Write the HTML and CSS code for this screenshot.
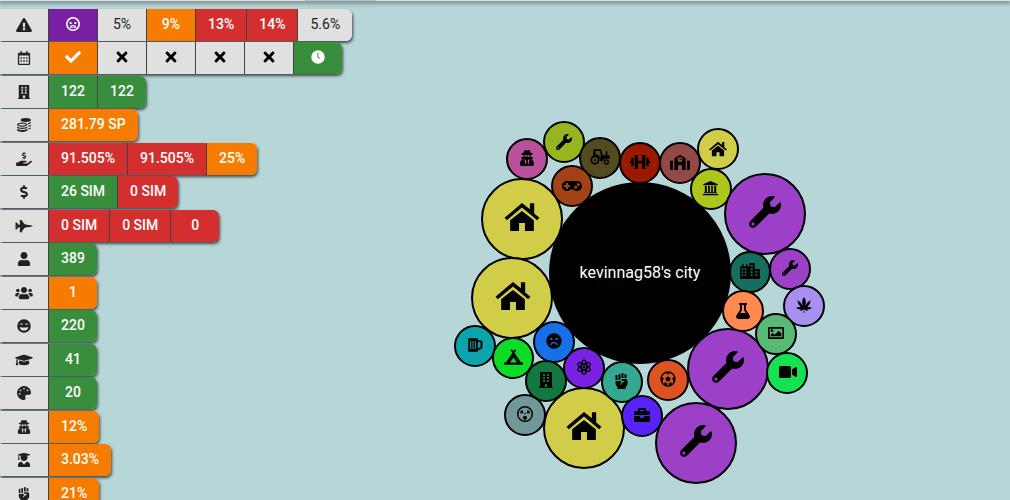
FILE: index.html
```
<!DOCTYPE html>
<html lang="en">
<head>
<meta charset="utf-8">
<meta name="viewport" content="width=device-width, initial-scale=1">
<title>kevinnag58's city</title>
<link rel="stylesheet" href="styles.css">
</head>
<body>
<svg class="symbols" aria-hidden="true">
  <symbol id="warning" viewBox="0 0 576 512"><path d="M569.517 440.013C587.975 472.007 564.806 512 527.94 512H48.054c-36.937 0-59.999-40.055-41.577-71.987L246.423 23.985c18.467-32.009 64.72-31.951 83.154 0l239.94 416.028zM288 354c-25.405 0-46 20.595-46 46s20.595 46 46 46 46-20.595 46-46-20.595-46-46-46zm-43.673-165.346l7.418 136c.347 6.364 5.609 11.346 11.982 11.346h48.546c6.373 0 11.635-4.982 11.982-11.346l7.418-136c.375-6.874-5.098-12.654-11.982-12.654h-63.383c-6.884 0-12.356 5.78-11.981 12.654z"/></symbol>
  <symbol id="check" viewBox="0 0 512 512"><path d="M173.898 439.404l-166.4-166.4c-9.997-9.997-9.997-26.206 0-36.204l36.203-36.204c9.997-9.998 26.207-9.998 36.204 0L192 312.69 432.095 72.596c9.997-9.997 26.207-9.997 36.204 0l36.203 36.204c9.997 9.997 9.997 26.206 0 36.204l-294.4 294.401c-9.998 9.997-26.207 9.997-36.204-.001z"/></symbol>
  <symbol id="times" viewBox="0 0 352 512"><path d="M242.72 256l100.07-100.07c12.28-12.28 12.28-32.19 0-44.48l-22.24-22.24c-12.28-12.28-32.19-12.28-44.48 0L176 189.28 75.93 89.21c-12.28-12.28-32.19-12.28-44.48 0L9.21 111.45c-12.28 12.28-12.28 32.19 0 44.48L109.28 256 9.21 356.07c-12.28 12.28-12.28 32.19 0 44.48l22.24 22.24c12.28 12.28 32.2 12.28 44.48 0L176 322.72l100.07 100.07c12.28 12.28 32.2 12.28 44.48 0l22.24-22.24c12.28-12.28 12.28-32.19 0-44.48L242.72 256z"/></symbol>
  <symbol id="clock" viewBox="0 0 512 512"><path fill-rule="evenodd" d="M256 8a248 248 0 1 0 0 496a248 248 0 1 0 0-496zM236 100h36v150l58 42-22 30-72-54z"/></symbol>
  <symbol id="calendar" viewBox="0 0 448 512"><path fill-rule="evenodd" d="M96 0h48v64h160V0h48v64h48q48 0 48 48v352q0 48-48 48H48q-48 0-48-48V112q0-48 48-48h48zM48 160v304h352V160z"/><path d="M96 224h56v56H96zm100 0h56v56h-56zm100 0h56v56h-56zM96 336h56v56H96zm100 0h56v56h-56zm100 0h56v56h-56z"/></symbol>
  <symbol id="building" viewBox="0 0 448 512"><path fill-rule="evenodd" d="M32 0h384v480h32v32H0v-32h32zM128 64v64h64V64zm128 0v64h64V64zM128 160v64h64v-64zm128 0v64h64v-64zM128 256v64h64v-64zm128 0v64h64v-64zM184 384v96h80v-96z"/></symbol>
  <symbol id="coins" viewBox="0 0 512 512"><g stroke="none"><path d="M128 72C128 32 214 0 320 0s192 32 192 72-86 72-192 72-192-32-192-72z"/><path d="M406 182q70-14 106-44v24c0 30-46 54-106 64zm14 96q60-14 92-40v24c0 28-40 50-92 60zm0 96q60-14 92-40v24c0 28-40 50-92 60z"/><path fill-rule="evenodd" d="M0 240c0-44 86-80 192-80s192 36 192 80-86 80-192 80S0 284 0 240zm50 0c20 24 80 34 142 34s122-10 142-34c-20-24-80-34-142-34s-122 10-142 34z"/><path d="M0 308q64 48 192 48t192-48v26c0 36-86 64-192 64S0 370 0 334zm0 84q64 48 192 48t192-48v50c0 40-86 70-192 70S0 482 0 442z"/></g></symbol>
  <symbol id="dollar" viewBox="0 0 288 512"><path d="M209.2 233.4l-108-31.6C88.7 198.2 80 186.5 80 173.5c0-16.3 13.2-29.5 29.5-29.5h66.3c12.2 0 24.2 3.7 34.2 10.5 6.1 4.1 14.3 3.1 19.5-2l34.8-34c7.1-6.9 6.1-18.4-1.8-24.5C238 74.8 207.4 64.1 176 64V16c0-8.8-7.2-16-16-16h-32c-8.8 0-16 7.2-16 16v48h-2.5C45.8 64-5.4 118.7.5 183.6c4.2 46.1 39.4 83.6 83.8 96.6l102.5 30c12.5 3.7 21.2 15.3 21.2 28.3 0 16.3-13.2 29.5-29.5 29.5h-66.3C100 368 88 364.3 78 357.5c-6.1-4.1-14.3-3.1-19.5 2l-34.8 34c-7.1 6.9-6.1 18.4 1.8 24.5 24.5 19.2 55.1 29.9 86.5 30v48c0 8.8 7.2 16 16 16h32c8.8 0 16-7.2 16-16v-48.2c46.6-.9 90.3-28.6 105.7-72.7 21.5-61.6-14.6-124.8-72.5-141.7z"/></symbol>
  <symbol id="hand" viewBox="0 0 576 512"><path d="M565.3 328.1c-11.8-10.7-30.2-10-42.6 0L430.3 402c-11.3 9.1-25.4 14-40 14H272c-8.8 0-16-7.2-16-16s7.2-16 16-16h78.3c15.9 0 30.7-10.9 33.3-26.6 3.3-20-12.1-37.4-31.6-37.4H192c-27 0-53.1 9.3-74.1 26.3L71.4 384H16c-8.8 0-16 7.2-16 16v96c0 8.8 7.2 16 16 16h356.8c14.5 0 28.6-4.9 40-14L564 377c15.2-12.1 16.4-35.3 1.3-48.9z"/><use href="#dollar" x="212" y="0" width="152" height="270"/></symbol>
  <symbol id="jet" viewBox="0 0 640 512"><path d="M544 224l-128-16-48-16h-24L227.158 44h39.509C278.333 44 288 41.375 288 38s-9.667-6-21.333-6H152v12h16v164h-48l-66.667-80H18.667L8 138.667V208h8v16h48v2.666l-64 8v42.667l64 8V288H16v16H8v69.333L18.667 384h34.667L120 304h48v164h-16v12h114.667c11.667 0 21.333-2.625 21.333-6s-9.667-6-21.333-6h-39.509L344 320h24l48-16 128-16c96-21.333 96-26.583 96-32 0-5.417 0-10.667-96-32z"/></symbol>
  <symbol id="user" viewBox="0 0 448 512"><path d="M224 256c70.7 0 128-57.3 128-128S294.7 0 224 0 96 57.3 96 128s57.3 128 128 128zm89.6 32h-16.7c-22.2 10.2-46.9 16-72.9 16s-50.6-5.8-72.9-16h-16.7C60.2 288 0 348.2 0 422.4V464c0 26.5 21.5 48 48 48h352c26.5 0 48-21.5 48-48v-41.6c0-74.2-60.2-134.4-134.4-134.4z"/></symbol>
  <symbol id="users" viewBox="0 0 640 512"><path d="M96 224c35.3 0 64-28.7 64-64s-28.7-64-64-64-64 28.7-64 64 28.7 64 64 64zm448 0c35.3 0 64-28.7 64-64s-28.7-64-64-64-64 28.7-64 64 28.7 64 64 64zm32 32h-64c-17.6 0-33.5 7.1-45.1 18.6 40.3 22.1 68.9 62 75.1 109.4h66c17.7 0 32-14.3 32-32v-32c0-35.3-28.7-64-64-64zm-256 0c61.9 0 112-50.1 112-112S381.9 32 320 32 208 82.1 208 144s50.1 112 112 112zm76.8 32h-8.3c-20.8 10-43.9 16-68.5 16s-47.6-6-68.5-16h-8.3C179.6 288 128 339.6 128 403.2V432c0 26.5 21.5 48 48 48h288c26.5 0 48-21.5 48-48v-28.8c0-63.6-51.6-115.2-115.2-115.2zm-223.7-13.4C161.5 263.1 145.6 256 128 256H64c-35.3 0-64 28.7-64 64v32c0 17.7 14.3 32 32 32h65.9c6.3-47.4 34.9-87.3 75.2-109.4z"/></symbol>
  <symbol id="smile" viewBox="0 0 512 512"><path fill-rule="evenodd" d="M256 8a248 248 0 1 0 0 496a248 248 0 1 0 0-496zM96 216q10-64 64-64t64 64q-64-48-128 0zm192 0q10-64 64-64t64 64q-64-48-128 0zM100 288q156 50 312 0q-16 136-156 136T100 288z"/></symbol>
  <symbol id="gradcap" viewBox="0 0 640 512"><path d="M622.34 153.2L343.4 67.5c-15.2-4.67-31.6-4.67-46.79 0L17.66 153.2c-23.54 7.23-23.54 38.36 0 45.59l48.63 14.94c-10.67 13.19-17.23 29.28-17.88 46.9C38.78 266.15 32 276.11 32 288c0 10.78 5.68 19.85 13.86 25.65L20.33 428.53C18.11 438.52 25.71 448 35.94 448h56.11c10.24 0 17.84-9.48 15.62-19.47L82.14 313.65C90.32 307.85 96 298.78 96 288c0-11.57-6.47-21.25-15.66-26.87.76-15.02 8.44-28.3 20.69-36.72L296.6 284.5c9.06 2.78 26.44 6.25 46.79 0l278.95-85.7c23.55-7.24 23.55-38.36 0-45.6zM352.79 315.09c-28.53 8.76-52.84 3.92-65.59 0l-145.02-44.55L128 384c0 35.35 85.96 64 192 64s192-28.65 192-64l-14.18-113.47-145.03 44.56z"/></symbol>
  <symbol id="palette" viewBox="0 0 512 512"><path d="M204.3 5C104.9 24.4 24.8 104.3 5.2 203.4c-37 187 131.7 326.4 258.8 306.7 41.2-6.4 61.4-54.6 42.5-91.7-23.1-45.4 9.9-98.4 60.9-98.4h79.7c35.8 0 64.8-29.6 64.9-65.3C511.5 97.1 368.1-26.9 204.3 5zM96 320c-17.7 0-32-14.3-32-32s14.3-32 32-32 32 14.3 32 32-14.3 32-32 32zm32-128c-17.7 0-32-14.3-32-32s14.3-32 32-32 32 14.3 32 32-14.3 32-32 32zm128-64c-17.7 0-32-14.3-32-32s14.3-32 32-32 32 14.3 32 32-14.3 32-32 32zm128 64c-17.7 0-32-14.3-32-32s14.3-32 32-32 32 14.3 32 32-14.3 32-32 32z"/></symbol>
  <symbol id="spy" viewBox="0 0 448 512"><path d="M383.9 308.3l23.9-62.6c4-10.5-3.7-21.7-15-21.7h-58.5c11-18.9 17.8-40.6 17.8-64v-.3c39.2-7.8 64-19.1 64-31.7 0-13.3-27.3-25.1-70.1-33-9.2-32.8-27-65.8-40.6-82.8-9.5-11.9-25.9-15.6-39.5-8.8l-27.6 13.8c-9 4.5-19.6 4.5-28.6 0L182.1 3.4c-13.6-6.8-30-3.1-39.5 8.8-13.5 17-31.4 50-40.6 82.8-42.7 7.9-70 19.7-70 33 0 12.6 24.8 23.9 64 31.7v.3c0 23.4 6.8 45.1 17.8 64H56.3c-11.5 0-19.2 11.7-14.7 22.3l25.8 60.2C27.3 329.8 0 372.7 0 422.4v44.8C0 491.9 20.1 512 44.8 512h358.4c24.7 0 44.8-20.1 44.8-44.8v-44.8c0-48.4-25.8-90.4-64.1-114.1zM176 480l-41.6-192 49.6 32 24 40-32 120zm96 0l-32-120 24-40 49.6-32L272 480zm41.7-298.5c-3.9 11.9-7 24.6-16.5 33.4-10.1 9.3-48 22.4-64-25-2.8-8.4-15.4-8.4-18.3 0-17 50.2-56 32.4-64 25-9.5-8.8-12.7-21.5-16.5-33.4-.8-2.5-6.3-5.7-6.3-5.8v-10.8c28.3 3.6 61 5.8 96 5.8s67.7-2.1 96-5.8v10.8c-.1.1-5.6 3.2-6.4 5.8z"/></symbol>
  <symbol id="graduate" viewBox="0 0 448 512"><path d="M319.4 320.6L224 416l-95.4-95.4C57.1 323.7 0 382.2 0 454.4v9.6c0 26.5 21.5 48 48 48h352c26.5 0 48-21.5 48-48v-9.6c0-72.2-57.1-130.7-128.6-133.8zM13.6 79.8l6.4 1.5v58.4c-7 4.2-12 11.5-12 20.3 0 8.4 4.6 15.4 11.1 19.7L3.5 242c-1.7 6.9 2.1 14 7.6 14h41.8c5.5 0 9.3-7.1 7.6-14l-15.6-62.3C51.4 175.4 56 168.4 56 160c0-8.8-5-16.1-12-20.3V87.1l66 15.9c-8.6 17.2-14 36.4-14 57 0 70.7 57.3 128 128 128s128-57.3 128-128c0-20.6-5.3-39.8-14-57l96.3-23.2c18.2-4.4 18.2-27.1 0-31.5l-190.4-46c-13-3.1-26.7-3.1-39.7 0L13.6 48.2c-18.1 4.4-18.1 27.2 0 31.6z"/></symbol>
  <symbol id="fist" viewBox="0 0 384 512"><path d="M255.98 160V16c0-8.84-7.16-16-16-16h-32c-8.84 0-16 7.16-16 16v146.93c5.02-1.78 10.34-2.93 15.97-2.93h48.03zm128 95.99c-.01-35.34-28.66-63.99-63.99-63.99H207.85c-8.78 0-15.9 7.07-15.9 15.85v.56c0 26.27 21.3 47.59 47.57 47.59h35.26c9.68 0 13.2 3.58 13.2 8v16.2c0 4.29-3.59 7.78-7.88 8-44.52 2.28-64.16 24.71-96.05 72.55l-6.31 9.47a7.994 7.994 0 0 1-11.09 2.22l-13.31-8.88a7.994 7.994 0 0 1-2.22-11.09l6.31-9.47c15.73-23.6 30.2-43.26 47.31-58.08-17.27-5.51-31.4-18.12-38.87-34.45-6.59 3.41-13.96 5.52-21.87 5.52h-32c-12.34 0-23.49-4.81-32-12.48C71.48 251.19 60.33 256 48 256H16c-5.64 0-10.97-1.15-16-2.95v77.93c0 33.95 13.48 66.5 37.49 90.51L63.99 448v64h255.98v-63.96l35.91-35.92A96.035 96.035 0 0 0 384 344.21l-.02-88.22zm-32.01-90.09V48c0-8.84-7.16-16-16-16h-32c-8.84 0-16 7.16-16 16v112h32c11.28 0 21.94 2.31 32 5.9zM16 224h32c8.84 0 16-7.16 16-16V80c0-8.84-7.16-16-16-16H16C7.16 64 0 71.16 0 80v128c0 8.84 7.16 16 16 16zm95.99 0h32c8.84 0 16-7.16 16-16V48c0-8.84-7.16-16-16-16h-32c-8.84 0-16 7.16-16 16v160c0 8.84 7.16 16 16 16z"/></symbol>
  <symbol id="angry" viewBox="0 0 44 44"><circle cx="22" cy="22" r="19.5" fill="none" stroke="currentColor" stroke-width="5"/><path d="M11 15l7 2v5h-6zM33 15l-7 2v5h6z"/><path fill-rule="evenodd" d="M12 34q0-9 10-9t10 9zm6-2h3v-4h-3zm5 0h3v-4h-3z"/></symbol>
  <symbol id="radface" viewBox="0 0 44 44"><circle cx="22" cy="22" r="20" fill="none" stroke="currentColor" stroke-width="4"/><path d="M18 20H8q1-7 6-10zM26 20h10q-1-7-6-10z"/><circle cx="22" cy="21" r="2"/><circle cx="22" cy="32" r="5.500"/></symbol>
  <symbol id="wrench" viewBox="0 0 512 512"><path d="M507.73 109.1c-2.24-9.03-13.54-12.09-20.12-5.51l-74.36 74.36-67.88-11.31-11.31-67.88 74.36-74.36c6.62-6.62 3.43-17.9-5.66-20.16-47.38-11.74-99.55.91-136.58 37.93-39.64 39.64-50.55 97.1-34.05 147.2L18.74 402.76c-24.99 24.99-24.99 65.51 0 90.5 24.99 24.99 65.51 24.99 90.5 0l213.21-213.21c50.12 16.71 107.47 5.68 147.37-34.22 37.07-37.07 49.7-89.32 37.91-136.73zM64 472c-13.25 0-24-10.75-24-24 0-13.26 10.75-24 24-24s24 10.74 24 24c0 13.25-10.75 24-24 24z"/></symbol>
  <symbol id="house" viewBox="0 0 106 85"><path d="M53 0L0 45l7 7L53 14l46 38 7-7-16-13V1H77v18zM53 24L17 52v33h27V61h18v24h27V52z"/></symbol>
  <symbol id="tractor" viewBox="0 0 60 48"><path fill-rule="evenodd" d="M11 1h22l5 18h9V7h5v12h7v10H45q-6 2-8 8h-6q-1-16-15-17-4 0-7 1zm5 5v10q10 0 15 8l2-5-4-13z"/><circle cx="15" cy="33" r="11" fill="none" stroke="currentColor" stroke-width="5"/><circle cx="15" cy="33" r="3"/><circle cx="49" cy="39" r="6" fill="none" stroke="currentColor" stroke-width="4"/></symbol>
  <symbol id="gamepad" viewBox="0 0 640 512"><path d="M480 96H160C71.6 96 0 167.6 0 256s71.6 160 160 160c44.8 0 85.2-18.4 114.2-48h91.5c29 29.6 69.5 48 114.2 48 88.4 0 160-71.6 160-160S568.4 96 480 96zM256 276c0 6.6-5.4 12-12 12h-52v52c0 6.6-5.4 12-12 12h-40c-6.6 0-12-5.4-12-12v-52H76c-6.6 0-12-5.4-12-12v-40c0-6.6 5.4-12 12-12h52v-52c0-6.6 5.4-12 12-12h40c6.6 0 12 5.4 12 12v52h52c6.6 0 12 5.4 12 12v40zm184 68c-26.5 0-48-21.5-48-48s21.5-48 48-48 48 21.5 48 48-21.5 48-48 48zm80-80c-26.5 0-48-21.5-48-48s21.5-48 48-48 48 21.5 48 48-21.5 48-48 48z"/></symbol>
  <symbol id="dumbbell" viewBox="0 0 60 48"><path d="M0 20h4v-9h7v26H4v-9H0zM14 3h10v17h12V3h10v42H36V28H24v17H14zM49 11h7v9h4v8h-4v9h-7z"/></symbol>
  <symbol id="school" viewBox="0 0 60 48"><path fill-rule="evenodd" d="M0 20h9v28H0zm51 0h9v28h-9zM13 48V13L30 2l17 11v35H36V34H24v14zM30 9a7.500 7.500 0 1 0 0 15a7.500 7.500 0 1 0 0-15z"/><path d="M29 12h2v4h4v2h-6z"/></symbol>
  <symbol id="landmark" viewBox="0 0 48 48"><path d="M24 3L2 13v3h44v-3zM7 18h6v19H7zm10 0h5v19h-5zm9 0h5v19h-5zm9 0h6v19h-6zM5 37h38v3H5zM1 42h46v4H1z"/></symbol>
  <symbol id="city" viewBox="0 0 60 48"><path fill-rule="evenodd" d="M0 10h7V3h4v7h7V3h4v7h6V0h16v18h16v30H0zm5 6v5h5v-5zm9 0v5h5v-5zM5 25v5h5v-5zm9 0v5h5v-5zM5 34v5h5v-5zm9 0v5h5v-5zM32 6v5h6V6zm0 10v5h6v-5zm0 9v5h6v-5zm0 9v5h6v-5zm14-10v5h6v-5zm0 10v5h6v-5z"/></symbol>
  <symbol id="flask" viewBox="0 0 448 512"><path d="M437.2 403.5L320 215V64h8c13.3 0 24-10.7 24-24V24c0-13.3-10.7-24-24-24H120c-13.3 0-24 10.7-24 24v16c0 13.3 10.7 24 24 24h8v151L10.8 403.5C-18.5 450.6 15.3 512 70.9 512h306.2c55.7 0 89.4-61.5 60.1-108.5zM137.9 320l48.2-77.6c3.7-5.2 5.8-11.6 5.8-18.4V64h64v160c0 6.9 2.2 13.2 5.8 18.4l48.2 77.6h-172z"/></symbol>
  <symbol id="leaf" viewBox="0 0 48 48"><path d="M24 0q9 13 4 26Q34 14 44 10q-1 13-10 20 8-1 14 3-7 5-15 4l3 5q-6 0-11-5v11h-2V37q-5 5-11 5l3-5Q7 38 0 33q6-4 14-3Q5 23 4 10q10 4 16 16Q15 13 24 0z"/></symbol>
  <symbol id="image" viewBox="0 0 48 36"><path fill-rule="evenodd" d="M4 0h40q4 0 4 4v28q0 4-4 4H4q-4 0-4-4V4q0-4 4-4zm1 5v26h38V5z"/><circle cx="12" cy="11" r="4"/><path d="M8 28v-5l6-6 6 6 12-12 8 8v9z"/></symbol>
  <symbol id="video" viewBox="0 0 576 512"><path d="M336.2 64H47.8C21.4 64 0 85.4 0 111.8v288.4C0 426.6 21.4 448 47.8 448h288.400c26.4 0 47.800-21.4 47.800-47.8V111.8c0-26.400-21.400-47.800-47.800-47.800zm189.400 37.700L416 177.300v157.400l109.600 75.500c21.200 14.600 50.400-.3 50.400-25.800V127.500c0-25.400-29.100-40.400-50.400-25.800z"/></symbol>
  <symbol id="beer" viewBox="0 0 44 42"><path fill-rule="evenodd" d="M0 1h29v40H0zM6 9v25h3V9zm7 0v25h3V9zm7 0v25h3V9zM29 7h8q6 0 6 6v14q0 4-4 6l-10 4v-6l8-3V12h-8z"/></symbol>
  <symbol id="tent" viewBox="0 0 58 48"><path fill-rule="evenodd" d="M20 3l4-3 5 6 5-6 4 3-6 8 20 30h6v7H0v-7h6l20-30zM29 26L18 41h22z"/></symbol>
  <symbol id="frown" viewBox="0 0 48 48"><path fill-rule="evenodd" d="M24 1a23 23 0 1 0 0 46a23 23 0 1 0 0-46zM13 15h6v6h-6zm16 0h6v6h-6zM12 36q3-9 12-9t12 9l-3 1q-3-6-9-6t-9 6z"/></symbol>
  <symbol id="atom" viewBox="0 0 48 48"><g fill="none" stroke="currentColor" stroke-width="4"><ellipse cx="24" cy="24" rx="8" ry="21"/><ellipse cx="24" cy="24" rx="8" ry="21" transform="rotate(60 24 24)"/><ellipse cx="24" cy="24" rx="8" ry="21" transform="rotate(120 24 24)"/></g><circle cx="24" cy="24" r="4"/></symbol>
  <symbol id="ball" viewBox="0 0 48 48"><circle cx="24" cy="24" r="21" fill="none" stroke="currentColor" stroke-width="4"/><path d="M24 16l8 6-3 9H19l-3-9zM15 4h18l-9 7zM3 17l8 3-2 10-6 3zM45 17l-8 3 2 10 6 3zM12 41l2-8 8 4-1 9zM36 41l-2-8-8 4 1 9z"/></symbol>
  <symbol id="briefcase" viewBox="0 0 512 512"><path d="M320 336c0 8.840-7.160 16-16 16h-96c-8.840 0-16-7.160-16-16v-48H0v144c0 25.600 22.400 48 48 48h416c25.600 0 48-22.400 48-48V288H320v48zm144-208h-80V80c0-25.600-22.400-48-48-48H176c-25.600 0-48 22.400-48 48v48H48c-25.600 0-48 22.400-48 48v80h512v-80c0-25.600-22.400-48-48-48zm-144 0H192V96h128v32z"/></symbol>
</svg>

<svg class="city-map" viewBox="0 0 1010 500" preserveAspectRatio="xMidYMid slice" role="img" aria-label="City map">
  <circle class="core" cx="640" cy="273" r="91"/>
  <text class="city-name" x="640" y="278">kevinnag58's city</text>
  <g class="lots">
    <circle cx="527" cy="159" r="20" fill="#b8509c"/>
    <circle cx="564" cy="142" r="20" fill="#97b520"/>
    <circle cx="600" cy="158" r="20" fill="#544a20"/>
    <circle cx="572" cy="186" r="20" fill="#a34216"/>
    <circle cx="640" cy="163" r="20" fill="#9c1800"/>
    <circle cx="680" cy="163" r="20" fill="#954848"/>
    <circle cx="718" cy="149" r="20" fill="#d2cd48"/>
    <circle cx="711" cy="189" r="20" fill="#adc61b"/>
    <circle cx="522" cy="219" r="40" fill="#d2cd48"/>
    <circle cx="512" cy="298" r="40" fill="#d2cd48"/>
    <circle cx="584" cy="428" r="40" fill="#d2cd48"/>
    <circle cx="765" cy="214" r="40" fill="#9c40c8"/>
    <circle cx="728" cy="369" r="40" fill="#9c40c8"/>
    <circle cx="696" cy="443" r="40" fill="#9c40c8"/>
    <circle cx="750" cy="272" r="20" fill="#166e5c"/>
    <circle cx="790" cy="269" r="20" fill="#9c40c8"/>
    <circle cx="743" cy="311" r="20" fill="#ff8a50"/>
    <circle cx="804" cy="306" r="20" fill="#a990f0"/>
    <circle cx="776" cy="334" r="20" fill="#58ba74"/>
    <circle cx="787" cy="373" r="20" fill="#14e250"/>
    <circle cx="475" cy="346" r="20" fill="#0ca4ac"/>
    <circle cx="513" cy="358" r="20" fill="#0cdc24"/>
    <circle cx="554" cy="342" r="20" fill="#1870e8"/>
    <circle cx="546" cy="381" r="20" fill="#127840"/>
    <circle cx="584" cy="368" r="20" fill="#7a22e4"/>
    <circle cx="622" cy="382" r="20" fill="#34a890"/>
    <circle cx="668" cy="380" r="20" fill="#de5420"/>
    <circle cx="642" cy="416" r="20" fill="#5a22fa"/>
    <circle cx="525" cy="415" r="20" fill="#709898"/>
  </g>
  <g>
    <use href="#spy" x="517" y="150" width="20" height="16"/>
    <use href="#wrench" x="556" y="134" width="16" height="16"/>
    <use href="#tractor" x="590" y="149" width="20" height="16"/>
    <use href="#gamepad" x="562" y="178" width="20" height="16"/>
    <use href="#dumbbell" x="630" y="154" width="20" height="16"/>
    <use href="#school" x="670" y="154" width="20" height="16"/>
    <use href="#house" x="709" y="141" width="18" height="16"/>
    <use href="#landmark" x="702" y="180" width="17" height="16"/>
    <use href="#house" x="504" y="203" width="36" height="28"/>
    <use href="#house" x="495" y="282" width="36" height="28"/>
    <use href="#house" x="566" y="412" width="36" height="28"/>
    <use href="#wrench" x="749" y="196" width="32" height="32"/>
    <use href="#wrench" x="712" y="351" width="32" height="32"/>
    <use href="#wrench" x="680" y="425" width="32" height="32"/>
    <use href="#city" x="740" y="263" width="20" height="16"/>
    <use href="#wrench" x="782" y="260" width="16" height="16"/>
    <use href="#flask" x="733" y="303" width="20" height="16"/>
    <use href="#leaf" x="796" y="297" width="16" height="16"/>
    <use href="#image" x="768" y="327" width="16" height="12"/>
    <use href="#video" x="779" y="364" width="18" height="16"/>
    <use href="#beer" x="468" y="338" width="15" height="14"/>
    <use href="#tent" x="504" y="349" width="19" height="16"/>
    <use href="#frown" x="546" y="333" width="16" height="16"/>
    <use href="#building" x="539" y="372" width="14" height="16"/>
    <use href="#atom" x="576" y="359" width="16" height="16"/>
    <use href="#fist" x="615" y="373" width="13" height="16"/>
    <use href="#ball" x="660" y="371" width="16" height="16"/>
    <use href="#briefcase" x="634" y="407" width="16" height="16"/>
    <use href="#radface" x="517" y="406" width="16" height="16"/>
  </g>
</svg>

<header class="topbar"><span class="topbar-left"></span><span class="topbar-tab"></span></header>

<main class="stats">
  <div class="row"><span class="label"><svg class="icon" role="img" aria-label="Alerts"><use href="#warning"/></svg></span><span class="cell purple"><svg class="icon"><use href="#angry"/></svg></span><span class="cell plain">5%</span><span class="cell orange">9%</span><span class="cell red">13%</span><span class="cell red">14%</span><span class="cell plain">5.6%</span></div>
  <div class="row"><span class="label"><svg class="icon"><use href="#calendar"/></svg></span><span class="cell orange"><svg class="icon large"><use href="#check"/></svg></span><span class="cell plain"><svg class="icon large cross"><use href="#times"/></svg></span><span class="cell plain"><svg class="icon large cross"><use href="#times"/></svg></span><span class="cell plain"><svg class="icon large cross"><use href="#times"/></svg></span><span class="cell plain"><svg class="icon large cross"><use href="#times"/></svg></span><span class="cell green"><svg class="icon"><use href="#clock"/></svg></span></div>
  <div class="row"><span class="label"><svg class="icon"><use href="#building"/></svg></span><span class="cell green">122</span><span class="cell green">122</span></div>
  <div class="row"><span class="label"><svg class="icon"><use href="#coins"/></svg></span><span class="cell orange">281.79 SP</span></div>
  <div class="row"><span class="label"><svg class="icon"><use href="#hand"/></svg></span><span class="cell red">91.505%</span><span class="cell red">91.505%</span><span class="cell orange">25%</span></div>
  <div class="row"><span class="label"><svg class="icon"><use href="#dollar"/></svg></span><span class="cell green">26 SIM</span><span class="cell red">0 SIM</span></div>
  <div class="row"><span class="label"><svg class="icon"><use href="#jet"/></svg></span><span class="cell red">0 SIM</span><span class="cell red">0 SIM</span><span class="cell red">0</span></div>
  <div class="row"><span class="label"><svg class="icon"><use href="#user"/></svg></span><span class="cell green">389</span></div>
  <div class="row"><span class="label"><svg class="icon"><use href="#users"/></svg></span><span class="cell orange">1</span></div>
  <div class="row"><span class="label"><svg class="icon"><use href="#smile"/></svg></span><span class="cell green">220</span></div>
  <div class="row"><span class="label"><svg class="icon"><use href="#gradcap"/></svg></span><span class="cell green">41</span></div>
  <div class="row"><span class="label"><svg class="icon"><use href="#palette"/></svg></span><span class="cell green">20</span></div>
  <div class="row"><span class="label"><svg class="icon"><use href="#spy"/></svg></span><span class="cell orange">12%</span></div>
  <div class="row"><span class="label"><svg class="icon"><use href="#graduate"/></svg></span><span class="cell orange">3.03%</span></div>
  <div class="row"><span class="label"><svg class="icon"><use href="#fist"/></svg></span><span class="cell orange">21%</span></div>
</main>
</body>
</html>
```

FILE: styles.css
```
* {
  box-sizing: border-box;
}

body {
  position: relative;
  height: 100vh;
  margin: 0;
  overflow: hidden;
  background: #b7d6d8;
  font-family: Roboto, "Liberation Sans", sans-serif;
  font-size: 14px;
}

svg {
  fill: currentColor;
}

.symbols {
  position: absolute;
  width: 0;
  height: 0;
}

.city-map {
  position: absolute;
  inset: 0;
  width: 100%;
  height: 100%;
}

.lots circle {
  stroke: #000;
  stroke-width: 2px;
}

.city-name {
  fill: #fff;
  font-size: 16px;
  text-anchor: middle;
}

.topbar {
  position: relative;
  display: flex;
  height: 1px;
  background: #e0e0e0;
  box-shadow: 0 1px 4px 1px rgba(0, 0, 0, 0.5);
}

.topbar-left {
  width: 305px;
}

.topbar-tab {
  width: 71px;
  background: #bdbdbd;
}

.stats {
  position: relative;
  display: flex;
  flex-direction: column;
  align-items: flex-start;
  margin-top: 8px;
}

.row {
  display: flex;
  height: 32px;
  margin-bottom: 1px;
  border-radius: 0 6px 6px 0;
  box-shadow: 1px 2px 3px rgba(0, 0, 0, 0.65);
}

.row:nth-child(even) {
  margin-bottom: 2px;
}

.label,
.cell {
  display: flex;
  align-items: center;
  justify-content: center;
  border-right: 1px solid #424242;
}

.label {
  width: 49px;
  background: #e0e0e0;
  color: #212121;
}

.cell {
  min-width: 49px;
  padding: 0 12px 2px;
  color: #fff;
  font-weight: 500;
}

.cell:last-child {
  min-width: 48px;
  border-right: 0;
  border-radius: 0 6px 6px 0;
}

.plain {
  background: #e0e0e0;
  color: #212121;
  font-weight: 400;
}

.purple {
  background: #7b1fa2;
}

.orange {
  background: #f57c00;
}

.red {
  background: #d32f2f;
}

.green {
  background: #388e3c;
}

.icon {
  width: 18px;
  height: 14px;
}

.large {
  height: 16px;
}

.cross {
  color: #000;
}
```
